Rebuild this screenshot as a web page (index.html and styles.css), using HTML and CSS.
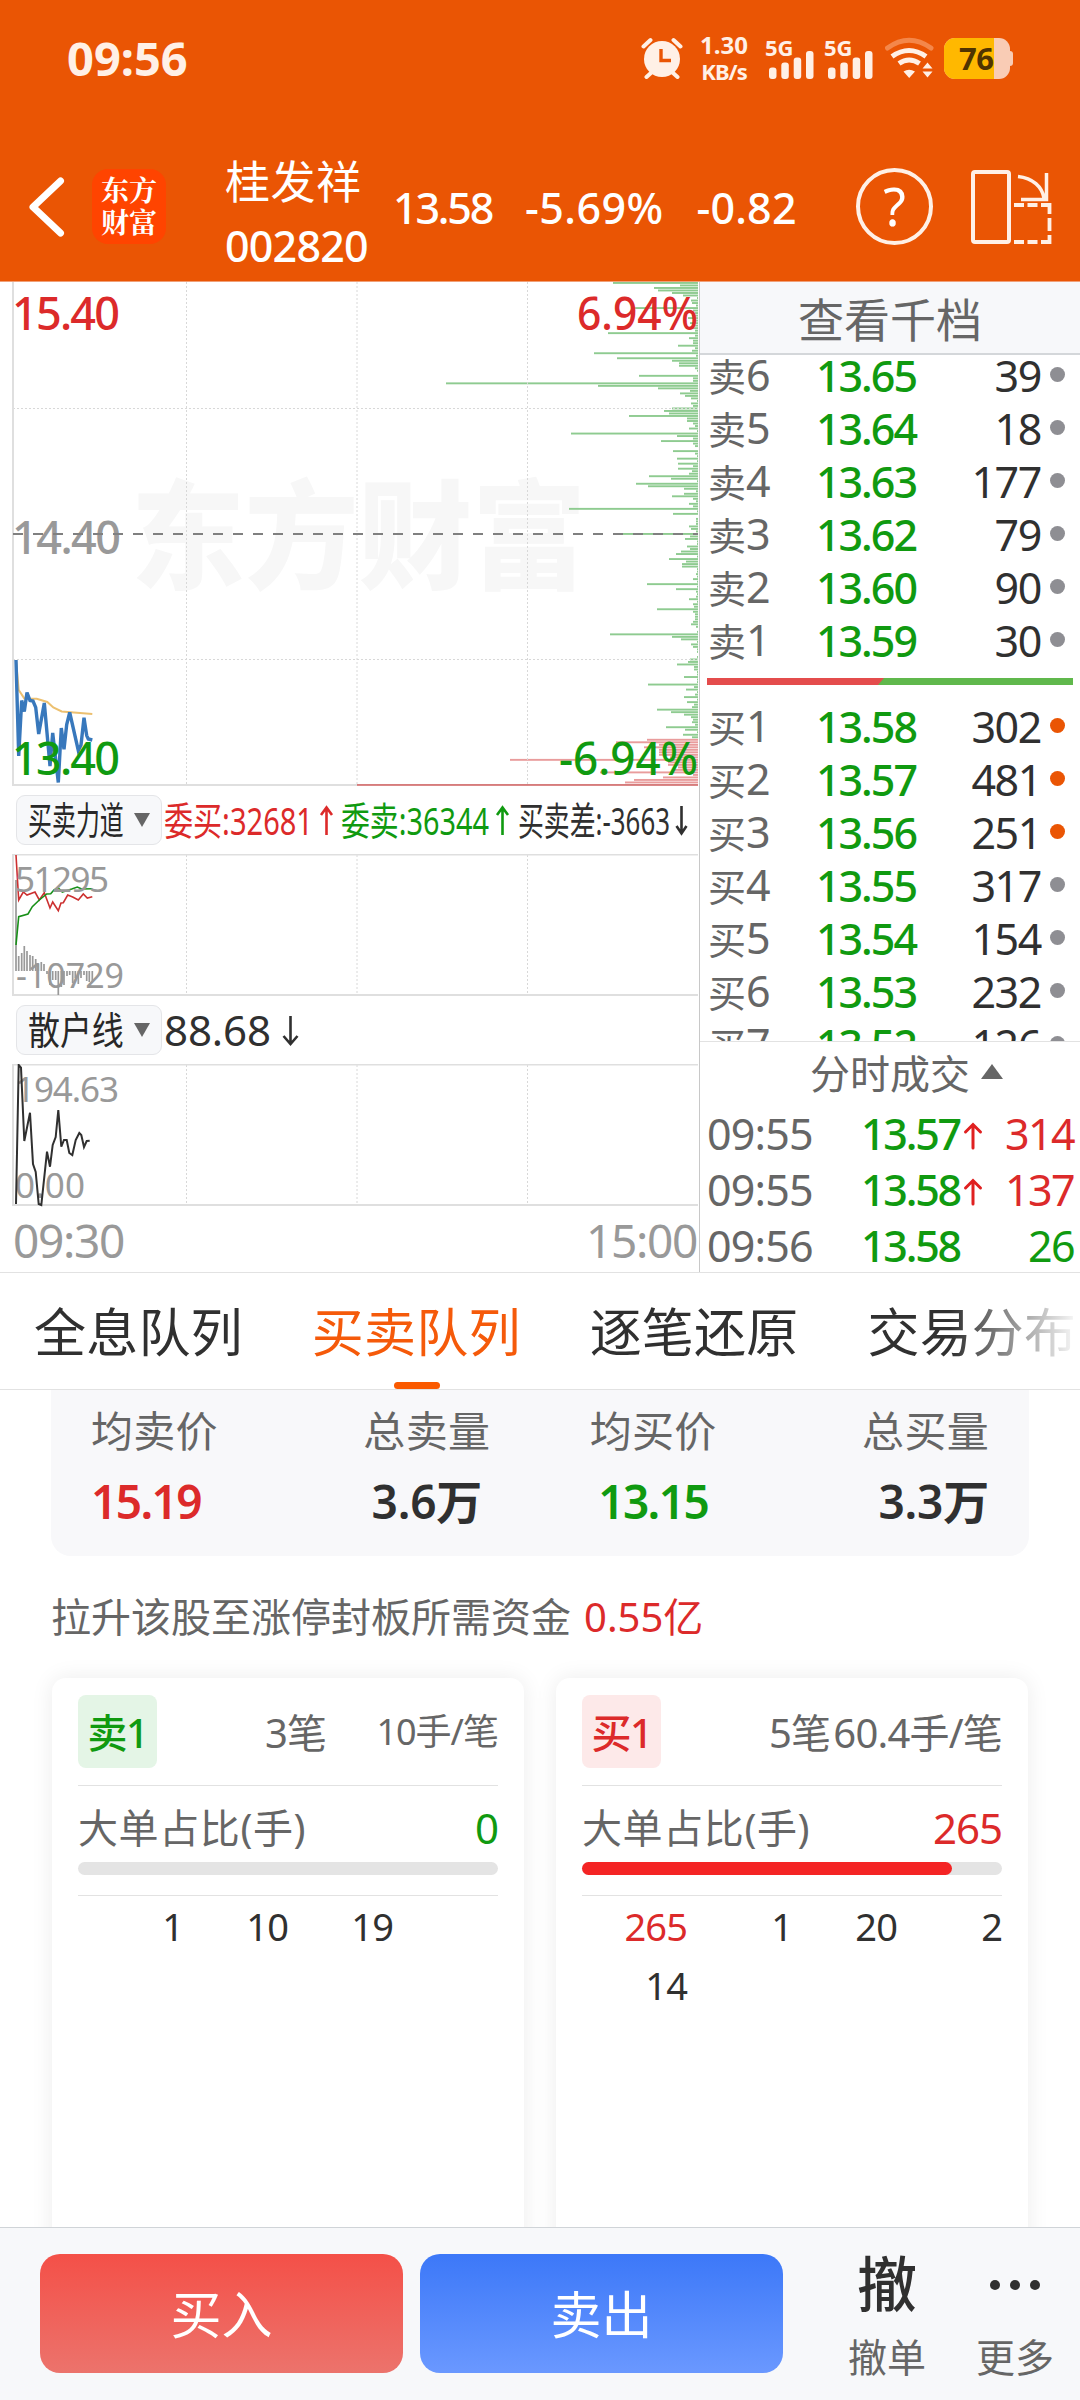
FILE: index.html
```html
<!DOCTYPE html>
<html lang="zh-CN">
<head>
    <meta charset="UTF-8" />
    <meta name="viewport" content="width=device-width, initial-scale=1.0" />
    <title>桂发祥 002820</title>
    <link rel="stylesheet" href="styles.css">
</head>
<body>
    <header>
        <div class="status-bar">
            <div class="clock">09:56</div>
            <svg class="alarm" width="42" height="42" viewBox="0 0 42 42">
                <circle cx="21" cy="22" r="18" fill="#fff0e6" />
                <path d="M2.500 9.500L9.500 3M32.500 3L39.500 9.500M5.500 40L11 35M31 35L36.500 40" stroke="#fff0e6" stroke-width="4" stroke-linecap="round" />
                <path d="M20 12V23.500H30" fill="none" stroke="#ea5504" stroke-width="3.400" />
            </svg>
            <div class="net-speed"><span>1.30</span><span>KB/s</span></div>
            <div class="signal">
                <span>5G</span>
                <svg width="46" height="28" viewBox="0 0 46 28" fill="#fff0e6">
                    <rect x="0" y="16.500" width="7.500" height="11.500" rx="3" />
                    <rect x="12.300" y="11.500" width="7.500" height="16.500" rx="3" />
                    <rect x="24.700" y="6.500" width="7.500" height="21.500" rx="3" />
                    <rect x="37" y="0" width="7.500" height="28" rx="3" />
                </svg>
            </div>
            <div class="signal">
                <span>5G</span>
                <svg width="46" height="28" viewBox="0 0 46 28" fill="#fff0e6">
                    <rect x="0" y="16.500" width="7.500" height="11.500" rx="3" />
                    <rect x="12.300" y="11.500" width="7.500" height="16.500" rx="3" />
                    <rect x="24.700" y="6.500" width="7.500" height="21.500" rx="3" />
                    <rect x="37" y="0" width="7.500" height="28" rx="3" />
                </svg>
            </div>
            <svg class="wifi" width="50" height="42" viewBox="0 0 50 42" fill="none" stroke-width="5">
                <path d="M2.500 11Q24 -4.500 46 11" stroke="#f4874a" stroke-linecap="round" />
                <path d="M7 19.500Q24 7.500 41 19.500" stroke="#fff0e6" />
                <path d="M14 26.500Q24 19.500 34.500 26.500" stroke="#fff0e6" />
                <path d="M18.500 34.500Q24 31 30 34.500L24.200 41ZM37.500 31.500L42.500 25.500L47.500 31.500ZM37.500 34.500H47.500L42.500 40.500Z" fill="#fff0e6" stroke="none" />
            </svg>
            <div class="battery"><div class="battery-level">76</div></div>
        </div>
        <div class="nav-bar">
            <svg class="back" width="40" height="64" viewBox="0 0 40 64">
                <path d="M34.500 6L7 32L34.500 58" fill="none" stroke="#fff" stroke-width="7" stroke-linecap="round" stroke-linejoin="round" />
            </svg>
            <div class="app-logo"><span>东方</span><span>财富</span></div>
            <div class="stock-name"><span class="name">桂发祥</span><span class="code">002820</span></div>
            <div class="quote"><span>13.58</span><span class="percent">-5.69%</span><span class="change">-0.82</span></div>
            <div class="help">?</div>
            <svg class="rotate" width="82" height="76" viewBox="0 0 82 76" fill="none" stroke="#fff0e6" stroke-width="4">
                <rect x="2" y="3" width="36" height="70" rx="2" />
                <path d="M47 7.500C62 9 71 18 73 29M75.500 4V30.500H50" stroke-width="3.500" />
                <path d="M43 36H53M56.500 36H66.500M70 36H78.500V45M78.500 49V62M78.500 66V73H70M66.500 73H56.500M53 73H43" stroke-width="3.800" />
            </svg>
        </div>
    </header>

    <main>
        <section class="charts">
            <svg class="chart" width="699" height="505" viewBox="0 282 699 505">
                <text class="watermark" x="131" y="580" textLength="455" lengthAdjust="spacingAndGlyphs">东方财富</text>
                <g id="depthBars"></g>
                <path class="grid" d="M186.500 282V785M357 282V785M527.500 282V785M13 408.500H698M13 659.500H698" />
                <path class="frame" d="M13 282V785H357" />
                <polyline class="avg-line" points="16,660 18.700,690 24.300,698.400 36.700,698.800 47.300,702 53.300,707.400 61.700,711.500 80,713 92.300,714" />
                <polyline class="price-line" points="16,660 18.700,756 21.700,700.500 24.300,711.500 27,692.600 30,700.500 33,701 35.700,707.400 38.700,734 44.300,703 50,766 52.700,733 58.300,782.500 61.300,728 64,749.400 66.700,724.600 69.700,712.500 78.300,750.400 81,745 84,717.700 86.700,735.600 88.300,739 92.300,740" />
                <text class="big up" x="12" y="330" textLength="108">15.40</text>
                <text class="big up" x="577" y="330" textLength="121" lengthAdjust="spacingAndGlyphs">6.94%</text>
                <text class="big muted" x="12" y="553.500" textLength="109">14.40</text>
                <path class="base-line" d="M13 534H698" />
                <text class="big down" x="12" y="775" textLength="108">13.40</text>
                <text class="big down" x="559" y="775" textLength="139" lengthAdjust="spacingAndGlyphs">-6.94%</text>
            </svg>

            <div class="indicator-row">
                <button class="indicator-btn"><span class="label four">买卖力道</span><i class="caret"></i></button>
                <svg class="readout" width="530" height="50" viewBox="163 794 530 50">
                    <text class="up" x="164" y="834" textLength="149" lengthAdjust="spacingAndGlyphs">委买:32681</text>
                    <path class="arrow up-arrow" d="M326.500 834V807M321 814L326.500 806.500L332 814" />
                    <text class="down" x="341" y="834" textLength="148" lengthAdjust="spacingAndGlyphs">委卖:36344</text>
                    <path class="arrow down-arrow" d="M502.500 834V807M497 814L502.500 806.500L508 814" />
                    <text class="dark" x="518" y="834" textLength="152" lengthAdjust="spacingAndGlyphs">买卖差:-3663</text>
                    <path class="arrow dark-arrow" d="M681.500 805V832M676.500 825L681.500 832.500L686.500 825" />
                </svg>
            </div>

            <svg class="chart" width="699" height="143" viewBox="0 854 699 143">
                <path class="grid" d="M186.500 855V994M357 855V994M527.500 855V994" />
                <path class="frame" d="M698 854.500H13V995H698" />
                <path class="hist" d="M16 971V880M18.700 971V956M21.700 971V953M24.300 971V946M27 971V951M30 971V955M32.700 971V956M35.700 971V959M38.300 971V964M41.300 971V962M44 971V964M47 971V974M50 971V985M52.700 971V980M55.700 971V980M58.300 971V995M61.300 971V987M64 971V985M67 971V976M69.700 971V975M72.700 971V983M75.300 971V978M78.300 971V984M81 971V978M84 971V975M86.700 971V981M89.300 971V982M92.300 971V982" />
                <polyline class="thin buy" points="16,855 18.700,900 23.300,892 27,895 35,892 39.300,900 44.300,892.700 50,908 52.700,902 58.300,910.700 61,903 63.300,902.700 67.700,895 72.700,897 78.300,900 83.300,894 87.300,898 92.300,896.700" />
                <polyline class="thin sell" points="16,945 18.700,916.700 28,914 32.300,906.700 39.300,900 46.700,894 50.700,893.700 54,890 58.300,888 62.300,892 71.700,889 77.300,887 81.700,889 92.300,888.700" />
                <text class="small muted" x="15" y="892" textLength="94">51295</text>
                <text class="small muted" x="16" y="988" textLength="108" lengthAdjust="spacingAndGlyphs">-10729</text>
            </svg>

            <div class="indicator-row">
                <button class="indicator-btn"><span class="label three">散户线</span><i class="caret"></i></button>
                <svg class="readout" width="530" height="50" viewBox="163 1004 530 50">
                    <text class="dark wide" x="164" y="1045" textLength="107">88.68</text>
                    <path class="arrow dark-arrow" d="M290.500 1015V1042M283.500 1035L290.500 1043L297.500 1035" />
                </svg>
            </div>

            <svg class="chart" width="699" height="143" viewBox="0 1064 699 143">
                <path class="grid" d="M186.500 1065V1204M357 1065V1204M527.500 1065V1204" />
                <path class="frame" d="M698 1064.500H13V1205H698" />
                <text class="small muted" x="15" y="1102" textLength="104">194.63</text>
                <text class="small muted" x="15" y="1198" textLength="70">0.00</text>
                <polyline class="thin retail" points="16,1204 18.700,1065 21,1067.700 24.300,1141 30,1112.700 33,1164 35.700,1172 38.700,1204 41.300,1205 47,1151.700 50,1166.700 52.700,1145 55.700,1137 58.300,1110 61.300,1146.700 64,1140 66.700,1140 69.300,1153 72.300,1155 75.700,1140 79.300,1133 81.300,1135 84,1147 86.700,1141 89.700,1140.700" />
            </svg>

            <div class="time-axis"><span>09:30</span><span>15:00</span></div>
        </section>

        <aside class="order-panel">
            <div class="panel-title">查看千档</div>
            <div class="order-book">
                <div id="asks"></div>
                <div class="ratio-bar"><div class="ratio-buy"></div></div>
                <div id="bids"></div>
            </div>
            <div class="ticks-title">分时成交<i class="caret-up"></i></div>
            <div id="ticks"></div>
        </aside>
    </main>

    <nav class="tabs">
        <span>全息队列</span>
        <span class="active">买卖队列</span>
        <span>逐笔还原</span>
        <span>交易分布</span>
    </nav>

    <section class="queue">
        <div class="summary">
            <div><span>均卖价</span><b class="up">15.19</b></div>
            <div class="center"><span>总卖量</span><b class="total">3.6万</b></div>
            <div class="center"><span>均买价</span><b class="down">13.15</b></div>
            <div class="right"><span>总买量</span><b class="total">3.3万</b></div>
        </div>
        <p class="limit-note">拉升该股至涨停封板所需资金<span class="up">0.55亿</span></p>
        <div class="cards">
            <div class="card">
                <div class="card-head">
                    <span class="badge sell-badge">卖1</span>
                    <span class="count">3笔</span>
                    <span class="average compact">10手/笔</span>
                </div>
                <div class="big-order"><span>大单占比(手)</span><b class="down">0</b></div>
                <div class="progress"></div>
                <div class="lots"><span>1</span><span>10</span><span>19</span></div>
            </div>
            <div class="card">
                <div class="card-head">
                    <span class="badge buy-badge">买1</span>
                    <span class="count">5笔</span>
                    <span class="average">60.4手/笔</span>
                </div>
                <div class="big-order"><span>大单占比(手)</span><b class="up">265</b></div>
                <div class="progress"><div class="progress-fill" style="width: 88%"></div></div>
                <div class="lots"><span class="up">265</span><span>1</span><span>20</span><span>2</span><span>14</span></div>
            </div>
        </div>
    </section>

    <footer>
        <button class="trade-btn buy-btn">买入</button>
        <button class="trade-btn sell-btn">卖出</button>
        <div class="action cancel"><span class="action-icon">撤</span><span>撤单</span></div>
        <div class="action more">
            <span class="action-icon dots"><i></i><i></i><i></i></span>
            <span>更多</span>
        </div>
    </footer>

    <script src="script.js"></script>
</body>
</html>
```
FILE: styles.css
```css
* {
    box-sizing: border-box;
}
body {
    margin: 0;
    width: 1080px;
    height: 2400px;
    overflow: hidden;
    display: flex;
    flex-direction: column;
    background: #fff;
    color: #303030;
    font-family: "Noto Sans", "Noto Sans CJK SC", sans-serif;
}
i, b {
    font-style: normal;
    font-weight: normal;
}
button {
    border: none;
    font-family: inherit;
    padding: 0;
}
.up { color: #dc2a2a; fill: #dc2a2a; }
.down { color: #109a10; fill: #109a10; }
.muted { color: #999; fill: #999; }
.dark { fill: #303030; }

/* header */
header {
    flex: none;
    height: 282px;
    background: #ea5504;
    border-bottom: 1px solid #f0a078;
    color: #fff;
}
.status-bar {
    display: flex;
    height: 116px;
    align-items: center;
    padding-left: 67px;
    color: #fff0e6;
}
.clock {
    width: 574px;
    font-size: 47px;
    line-height: 60px;
    font-weight: 700;
    letter-spacing: 0;
}
.net-speed {
    display: flex;
    flex-direction: column;
    align-items: center;
    width: 54px;
    margin-left: 14px;
    font-weight: 700;
    font-size: 24px;
    line-height: 26px;
}
.net-speed span:last-child {
    font-size: 22px;
    letter-spacing: -1px;
}
.signal {
    display: flex;
    flex-direction: column;
    width: 46px;
    height: 42px;
    margin-left: 16px;
    font-weight: 700;
    font-size: 22px;
    line-height: 21px;
}
.signal + .signal { margin-left: 13px; }
.signal span { margin-left: -2px; }
.signal svg { margin: -7px 0 0 2px; }
.wifi { margin-left: 13px; }
.battery {
    position: relative;
    width: 66px;
    height: 41px;
    margin-left: 9px;
    border-radius: 11px;
    background: #f9ccb5;
}
.battery::after {
    content: "";
    position: absolute;
    right: -3px;
    top: 13px;
    width: 4px;
    height: 15px;
    border-radius: 0 3px 3px 0;
    background: #f9ccb5;
}
.battery-level {
    width: 50px;
    height: 41px;
    padding-left: 15px;
    border-radius: 11px 0 0 11px;
    background: #ffb800;
    color: #503400;
    font-size: 31px;
    line-height: 40px;
    font-weight: 700;
    letter-spacing: -0.5px;
}
.nav-bar {
    display: flex;
    align-items: center;
    height: 165px;
    padding: 16px 0 0 26px;
}
.app-logo {
    display: flex;
    flex-direction: column;
    align-items: center;
    justify-content: center;
    width: 74px;
    height: 75px;
    margin-left: 26px;
    padding-bottom: 4px;
    border-radius: 16px;
    background: #ff4400;
    font-family: "Noto Serif CJK SC", "Noto Sans CJK SC", sans-serif;
    font-size: 28px;
    font-weight: 700;
    line-height: 32px;
}
.stock-name {
    display: flex;
    flex-direction: column;
    width: 168px;
    margin: 15px 0 0 59px;
    line-height: 64px;
}
.stock-name .name { font-size: 45px; letter-spacing: 0.5px; }
.stock-name .code {
    font-size: 43px;
    letter-spacing: -0.8px;
    font-weight: 500;
}
.quote {
    display: flex;
    gap: 33px;
    width: 463px;
    padding-top: 2px;
    font-size: 43px;
    line-height: 60px;
    font-weight: 500;
    letter-spacing: -2.2px;
    white-space: nowrap;
}
.quote .percent { letter-spacing: 0.4px; }
.quote .change { letter-spacing: 0.2px; }
.help {
    width: 77px;
    height: 77px;
    border: 4px solid #fff0e6;
    border-radius: 50%;
    font-size: 52px;
    line-height: 68px;
    text-align: center;
}
.rotate { margin-left: 38px; }

/* quote area */
main {
    flex: none;
    display: flex;
    height: 991px;
    border-bottom: 1px solid #e2e2e2;
}
.charts {
    width: 700px;
    border-right: 1px solid #c8c8c8;
}
.chart { display: block; }
.watermark {
    font-family: "Noto Sans CJK SC", sans-serif;
    font-size: 118px;
    font-weight: 900;
    fill: #f7f7f7;
}
.grid {
    fill: none;
    stroke: #d8d8d8;
    stroke-dasharray: 2 2;
}
.frame {
    fill: none;
    stroke: #dfdfdf;
    stroke-width: 2;
}
.base-line {
    stroke: #808080;
    stroke-width: 2;
    stroke-dasharray: 10 10;
}
.avg-line {
    fill: none;
    stroke: #ecc070;
    stroke-width: 2;
}
.price-line {
    fill: none;
    stroke: #3878bc;
    stroke-width: 3.4;
}
.big { font-size: 45px; font-weight: 500; }
.small { font-size: 35px; }
.thin {
    fill: none;
    stroke-width: 1.6;
}
.buy { stroke: #cc3030; }
.sell { stroke: #189018; }
.retail { stroke: #303030; stroke-width: 2; }
.hist { stroke: #999; stroke-width: 1.7; }
.indicator-row {
    display: flex;
    align-items: center;
    height: 67px;
    padding: 0 0 2px 16px;
}
.indicator-btn {
    display: flex;
    align-items: center;
    width: 146px;
    height: 50px;
    padding-left: 11px;
    border: 1px solid #e4e5e8;
    border-radius: 9px;
    background: #f7f8fa;
    color: #282828;
    font-size: 38px;
    line-height: 47px;
    text-align: left;
}
.indicator-btn .label {
    width: 106px;
    white-space: nowrap;
    transform-origin: left;
}
.label.four { transform: scaleX(0.63); }
.label.three { transform: scaleX(0.84); }
.caret {
    border: 8.5px solid transparent;
    border-top: 14px solid #666;
    border-bottom: none;
}
.readout {
    margin-left: 1px;
    font-size: 39px;
}
.readout .wide { font-size: 42px; }
.arrow {
    fill: none;
    stroke-width: 2.6;
}
.up-arrow { stroke: #dc2a2a; }
.down-arrow { stroke: #109a10; }
.dark-arrow { stroke: #303030; }
.time-axis {
    display: flex;
    justify-content: space-between;
    padding: 0 2px 0 13px;
    color: #999;
    font-size: 46px;
    line-height: 66px;
    letter-spacing: -1.3px;
}

/* order book */
.order-panel {
    width: 380px;
}
.panel-title {
    height: 73px;
    border-bottom: 2px solid #d4d7da;
    background: #f7f8fa;
    color: #666;
    font-size: 46px;
    line-height: 75px;
    text-align: center;
}
.order-book {
    height: 687px;
    overflow: hidden;
    border-bottom: 1px solid #e2e2e2;
}
#asks { margin-top: -7px; }
.level {
    display: grid;
    grid-template-columns: 90px 118px 125px 15px;
    align-items: center;
    height: 53px;
    padding-left: 8px;
    font-size: 43px;
    line-height: 53px;
    letter-spacing: -2px;
}
.level .side { color: #666; }
.level .side i {
    margin-right: 2px;
    font-size: 38px;
}
.level .price, .level .volume { text-align: right; }
.level .price { font-weight: 500; }
.level .volume { letter-spacing: -1.4px; }
.level .dot {
    width: 15px;
    height: 15px;
    margin: -2px 0 0 9px;
    border-radius: 50%;
    background: #8e8e93;
}
.level .dot.hot { background: #ea5504; }
.ratio-bar {
    height: 7px;
    margin: 12px 7px 14px;
    background: #60b84c;
}
.ratio-buy {
    width: 177px;
    height: 7px;
    background: #e44c4c;
    clip-path: polygon(0 0, 100% 0, 171px 100%, 0 100%);
}
.ticks-title {
    display: flex;
    align-items: center;
    gap: 11px;
    height: 63px;
    color: #666;
    font-size: 40px;
    line-height: 64px;
    padding-left: 110px;
}
.caret-up {
    margin-top: -5px;
    border: 11.500px solid transparent;
    border-bottom: 15px solid #666;
    border-top: none;
}
.tick {
    display: grid;
    grid-template-columns: 120px 133px 24px 88px;
    align-items: center;
    height: 56px;
    padding: 2px 0 0 7px;
    font-size: 43px;
    line-height: 54px;
    letter-spacing: -2.2px;
}
.tick .time { color: #666; letter-spacing: -0.8px; }
.tick .price, .tick .volume { text-align: right; }
.tick .price { font-weight: 500; }
.tick .volume { letter-spacing: -1.6px; margin-right: -2px; }
.tick svg { margin: -4px 0 0 3px; }

/* tabs */
.tabs {
    position: relative;
    flex: none;
    display: flex;
    gap: 69px;
    height: 117px;
    padding-left: 34px;
    border-bottom: 1px solid #e2e2e2;
    font-size: 52px;
    line-height: 118px;
    letter-spacing: 0.2px;
    white-space: nowrap;
    overflow: hidden;
}
.tabs span { position: relative; }
.tabs .active { color: #f55a0a; }
.tabs .active::after {
    content: "";
    position: absolute;
    left: 82px;
    bottom: 0;
    width: 46px;
    height: 7px;
    border-radius: 4px;
    background: #fa5a00;
}
.tabs::after {
    content: "";
    position: absolute;
    right: 0;
    top: 0;
    width: 130px;
    height: 116px;
    background: linear-gradient(to right, rgba(255, 255, 255, 0), #fff);
}

/* queue */
.queue {
    flex: 1;
    min-height: 0;
    overflow: hidden;
    padding: 0 51px;
}
.summary {
    display: flex;
    justify-content: space-between;
    height: 166px;
    padding: 9px 40px 0 40px;
    border-radius: 0 0 20px 20px;
    background: #f8f8fa;
}
.summary div {
    display: flex;
    flex-direction: column;
}
.summary .center { align-items: center; }
.summary .right { align-items: flex-end; }
.summary div:nth-child(2) { margin-left: 46px; }
.summary div:nth-child(3) { margin-right: 46px; }
.summary span {
    color: #666;
    font-size: 42px;
    line-height: 64px;
    letter-spacing: 0.3px;
}
.summary b {
    font-size: 46px;
    line-height: 77px;
    font-weight: 600;
    letter-spacing: -1.6px;
}
.summary .total { letter-spacing: -0.2px; }
.limit-note {
    margin: 30px 0 0;
    color: #666;
    font-size: 40px;
    line-height: 62px;
}
.limit-note span { margin-left: 13px; }
.cards {
    display: flex;
    gap: 32px;
    margin: 30px 1px 0;
}
.card {
    width: 472px;
    height: 640px;
    padding: 17px 26px 0;
    border-radius: 14px;
    box-shadow: 0 0 22px rgba(0, 0, 0, 0.08);
}
.card-head {
    display: flex;
    align-items: center;
    height: 91px;
    padding-bottom: 17px;
    border-bottom: 1px solid #e2e2e2;
    color: #666;
    font-size: 40px;
}
.badge {
    width: 79px;
    height: 73px;
    border-radius: 8px;
    font-size: 40px;
    line-height: 75px;
    font-weight: 500;
    letter-spacing: -1.5px;
    text-align: center;
}
.sell-badge { background: #e4f5e6; color: #109a10; }
.buy-badge { background: #fde9e9; color: #dc2a2a; }
.count {
    width: 169px;
    padding-bottom: 2px;
    text-align: right;
    letter-spacing: -1px;
}
.average {
    flex: 1;
    padding-bottom: 2px;
    text-align: right;
    white-space: nowrap;
    letter-spacing: -0.8px;
}
.average.compact { font-size: 36px; padding-bottom: 5px; letter-spacing: -1px; }
.big-order {
    display: flex;
    justify-content: space-between;
    height: 76px;
    color: #666;
    font-size: 40px;
    line-height: 84px;
}
.big-order span { letter-spacing: 0.6px; }
.big-order b { font-size: 42px; letter-spacing: -1px; }
.progress {
    height: 13px;
    border-radius: 7px;
    background: #e4e4e4;
}
.progress-fill {
    height: 13px;
    border-radius: 7px;
    background: #f42424;
}
.lots {
    display: grid;
    grid-template-columns: repeat(4, 105px);
    margin-top: 20px;
    padding-top: 1px;
    border-top: 1px solid #e2e2e2;
    font-size: 38px;
    line-height: 59px;
    letter-spacing: -0.9px;
    text-align: right;
}

/* footer */
footer {
    flex: none;
    display: flex;
    height: 173px;
    padding: 26px 0 0 40px;
    border-top: 1px solid #d0d4d8;
    background: #f7f8fa;
}
.trade-btn {
    width: 363px;
    height: 119px;
    margin-right: 17px;
    border-radius: 20px;
    color: #fff;
    font-size: 51px;
    line-height: 121px;
}
.buy-btn { background: linear-gradient(#f45048, #ec736c); }
.sell-btn { background: linear-gradient(#3c78f8, #6a98ff); }
.action {
    display: flex;
    flex-direction: column;
    align-items: center;
    width: 80px;
    color: #666;
    font-size: 39px;
    line-height: 57px;
}
.cancel { margin: 0 48px 0 47px; }
.action-icon {
    height: 74px;
    color: #303030;
    font-size: 60px;
    line-height: 60px;
    font-weight: 500;
}
.dots {
    display: flex;
    gap: 10px;
    padding-top: 26px;
}
.dots i {
    width: 10px;
    height: 10px;
    border-radius: 50%;
    background: #303030;
}
```
FILE: script.js
```js
// resting volume at every cent from 15.40 down to 13.40, as bar lengths
const depth = [
    85, 18, 44, 40, 26, 15, 1, 7, 6, 2, 64, 5, 3, 6, 10, 5, 8, 5, 5, 3,
    90, 3, 9, 5, 5, 20, 3, 6, 104, 2, 81, 26, 19, 19, 3, 1, 0, 59, 5, 5,
    252, 100, 40, 8, 18, 13, 7, 1, 7, 5, 26, 34, 29, 69, 11, 11, 5, 3, 9, 1,
    127, 21, 5, 37, 5, 3, 0, 25, 3, 1, 21, 1, 20, 5, 20, 6, 9, 49, 27, 1,
    62, 50, 14, 2, 14, 26, 5, 2, 9, 5, 129, 1, 25, 0, 2, 2, 2, 9, 7, 2,
    83, 8, 13, 1, 1, 11, 8, 17, 22, 1, 29, 12, 16, 16, 1, 1, 2, 1, 5, 1,
    51, 1, 22, 2, 1, 2, 9, 1, 5, 4, 41, 5, 3, 3, 3, 5, 7, 2, 0, 1,
    88, 26, 17, 1, 7, 5, 1, 1, 0, 1, 8, 10, 21, 4, 4, 1, 1, 14, 1, 1,
    50, 4, 12, 1, 3, 14, 1, 11, 4, 6, 41, 27, 14, 7, 5, 6, 3, 32, 13, 1,
    15, 6, 51, 82, 39, 54, 39, 39, 39, 28, 188, 30, 30, 20, 25, 98, 5, 35, 64, 73,
    341
];
const firstBid = 182;

document.getElementById('depthBars').innerHTML = depth.map((len, i) => {
    const y = 282 + i * 2.51;
    let color = i < firstBid ? '#8ecb90' : '#e99c9c';
    if (i === depth.length - 1) color = '#d67c7c';
    return `<rect x="${698 - len}" y="${y}" width="${len}" height="1.9" fill="${color}" />`;
}).join('');

const asks = [[6, '13.65', 39], [5, '13.64', 18], [4, '13.63', 177], [3, '13.62', 79], [2, '13.60', 90], [1, '13.59', 30]];
const bids = [[1, '13.58', 302], [2, '13.57', 481], [3, '13.56', 251], [4, '13.55', 317], [5, '13.54', 154], [6, '13.53', 232], [7, '13.52', 126]];

function renderLevels(id, side, list, hotCount) {
    document.getElementById(id).innerHTML = list.map(([n, price, volume], i) => `
        <div class="level">
            <span class="side"><i>${side}</i>${n}</span>
            <span class="price down">${price}</span>
            <span class="volume">${volume}</span>
            <span class="dot ${i < hotCount ? 'hot' : ''}"></span>
        </div>
    `).join('');
}

renderLevels('asks', '卖', asks, 0);
renderLevels('bids', '买', bids, 3);

const ticks = [['09:55', '13.57', 314, true], ['09:55', '13.58', 137, true], ['09:56', '13.58', 26, false]];
const arrow = '<svg width="20" height="28" viewBox="0 0 20 28"><path d="M10 26V3M2.500 10L10 2.500L17.500 10" fill="none" stroke="#e02020" stroke-width="3" stroke-linecap="round" /></svg>';

document.getElementById('ticks').innerHTML = ticks.map(([time, price, volume, rising]) => `
    <div class="tick">
        <span class="time">${time}</span>
        <span class="price down">${price}</span>
        <span>${rising ? arrow : ''}</span>
        <span class="volume ${rising ? 'up' : 'down'}">${volume}</span>
    </div>
`).join('');
```
